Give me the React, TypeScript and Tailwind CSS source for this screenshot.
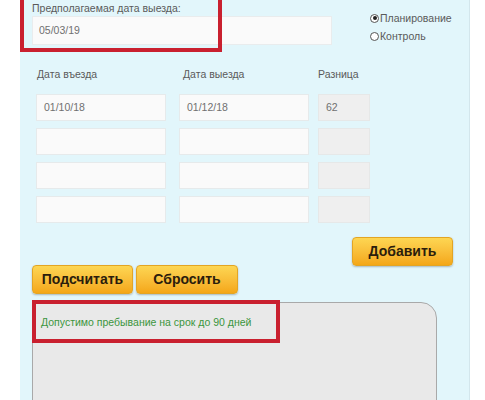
import React from "react";

const btn =
  "h-[29px] rounded-[4px] border border-[#e3a524] bg-gradient-to-b from-[#fdd652] to-[#f4a716] text-[14px] font-bold text-[#2b1d0c] shadow-[0_1px_2px_rgba(0,0,0,0.25)] flex items-center justify-center";
const field =
  "h-[27px] bg-[#fafafa] border border-[#e6eaeb] text-[10.5px] text-[#707070] pl-[7px] flex items-center";
const gray =
  "h-[27px] bg-[#efefef] border border-[#e6e8e8] text-[10.5px] text-[#707070] pl-[7px] flex items-center";

export default function App() {
  const rows = [
    ["01/10/18", "01/12/18", "62"],
    ["", "", ""],
    ["", "", ""],
    ["", "", ""],
  ];
  return (
    <div
      className="w-[485px] h-[400px] bg-white overflow-hidden"
      style={{ fontFamily: '"Liberation Sans", Arial, sans-serif' }}
    >
      <div className="relative ml-[20px] w-[450px] h-[400px] bg-[#e2f6fb] border-r border-[#d3e6ec]">
        {/* top section */}
        <div className="flex pl-[12px] pt-[1px]">
          <div className="w-[300px]">
            <div className="text-[10.5px] leading-[15px] text-[#5a5a5a]">
              Предполагаемая дата выезда:
            </div>
            <div className="h-[29px] bg-[#fafafa] border border-[#e9eced] text-[10.5px] text-[#707070] pl-[6px] flex items-center">
              05/03/19
            </div>
          </div>
          <div className="ml-[38px] pt-[8px] text-[10.5px] leading-[18px] text-[#5a5a5a]">
            <div className="flex items-center">
              <span className="w-[9px] h-[9px] rounded-full border border-[#555] bg-white flex items-center justify-center mr-[1px]">
                <span className="w-[4px] h-[4px] rounded-full bg-[#222]" />
              </span>
              Планирование
            </div>
            <div className="flex items-center">
              <span className="w-[9px] h-[9px] rounded-full border border-[#555] bg-white mr-[1px]" />
              Контроль
            </div>
          </div>
        </div>

        {/* table */}
        <div className="pl-[16px] mt-[22px]">
          <div className="grid grid-cols-[130px_130px_52px] gap-x-[13px] text-[10.5px] leading-[15px] text-[#5a5a5a]">
            <div className="pl-[1px]">Дата въезда</div>
            <div className="pl-[4px]">Дата выезда</div>
            <div className="-ml-[4px]">Разница</div>
          </div>
          <div className="mt-[12px] flex flex-col gap-[7px]">
            {rows.map((r, i) => (
              <div key={i} className="flex">
                <div className={`${field} w-[130px]`}>{r[0]}</div>
                <div className={`${field} w-[130px] ml-[13px]`}>{r[1]}</div>
                <div className={`${gray} w-[52px] ml-[9px]`}>{r[2]}</div>
              </div>
            ))}
          </div>
        </div>

        {/* add button */}
        <div className="flex justify-end pr-[16px] mt-[14px]">
          <div className={`${btn} w-[101px]`}>Добавить</div>
        </div>

        {/* action buttons */}
        <div className="flex gap-[3px] pl-[12px] -mt-[1px]">
          <div className={`${btn} w-[101px]`}>Подсчитать</div>
          <div className={`${btn} w-[102px]`}>Сбросить</div>
        </div>

        {/* result box */}
        <div className="relative ml-[12px] mt-[8px] w-[405px] h-[120px] bg-[#e9e9e9] border border-[#a9a9a9] rounded-tr-[16px]">
          <div className="pl-[8px] pt-[12px] text-[10.5px] leading-[15px] text-[#3b953d]">
            Допустимо пребывание на срок до 90 дней
          </div>
          <div className="absolute left-[-1px] top-[-3px] w-[248px] h-[43px] border-[4px] border-[#c9202f]" />
        </div>

        {/* annotation box top */}
        <div className="absolute left-0 top-[-10px] w-[202px] h-[62px] border-[4px] border-[#c9202f]" />
      </div>
    </div>
  );
}
